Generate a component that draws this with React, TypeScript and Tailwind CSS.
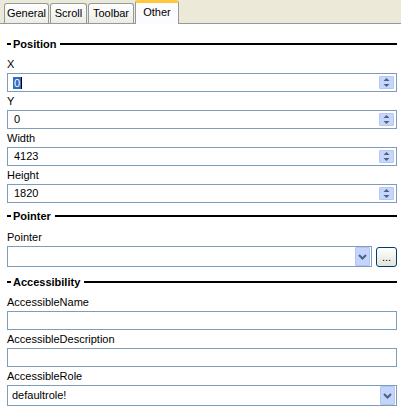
import { ReactNode } from "react";

const tabs = ["General", "Scroll", "Toolbar", "Other"];
const tabWidths: Record<string, string> = {
  General: "w-[45px]",
  Scroll: "w-[37px]",
  Toolbar: "w-[46px]",
  Other: "w-[44px]",
};

function SectionHeader({ title }: { title: string }) {
  return (
    <div className="flex items-center h-[22px]">
      <div className="w-[4px] h-[2px] bg-black" />
      <span className="ml-[2px] mr-[4px] font-bold text-[11px] leading-[13px] text-black">{title}</span>
      <div className="flex-1 h-[2px] bg-black" />
    </div>
  );
}

function Label({ children }: { children: ReactNode }) {
  return <div className="h-[18px] pt-[3px] leading-[13px] text-[11px] text-black">{children}</div>;
}

// XP-style up/down spinner on the right of a number box
function Spinner() {
  return (
    <div className="w-[15px] h-[13px] bg-[#c6d6fc] border border-[#b4c8f4] rounded-[1px] flex items-center justify-center">
      <svg width="7" height="9" viewBox="0 0 7 9">
        <path d="M3.5 0 L6.5 3 L0.5 3 Z" fill="#4d6185" />
        <path d="M0.5 6 L6.5 6 L3.5 9 Z" fill="#4d6185" />
      </svg>
    </div>
  );
}

function NumberField({ value, selected }: { value: string; selected?: boolean }) {
  return (
    <div className="h-[19px] border border-[#7f9db9] bg-white flex items-center pl-[5px] pr-[2px]">
      <div className="flex-1 flex items-center text-[11px] leading-[13px] text-black">
        {selected ? (
          <>
            <span className="bg-[#316ac5] text-white px-[1px] leading-[12px]">{value}</span>
            <span className="w-[1px] h-[12px] bg-black" />
          </>
        ) : (
          <span className="pl-[1px]">{value}</span>
        )}
      </div>
      <Spinner />
    </div>
  );
}

function ComboButton() {
  return (
    <div className="w-[15px] h-[19px] bg-[#c4d4fc] border border-[#b2c6f6] rounded-[1px] flex items-center justify-center">
      <svg width="9" height="6" viewBox="0 0 9 6">
        <path d="M1 1 L4.5 4.5 L8 1" stroke="#4d6185" strokeWidth="2" fill="none" />
      </svg>
    </div>
  );
}

function Combo({ value, className }: { value?: string; className?: string }) {
  return (
    <div className={`h-[21px] border border-[#7f9db9] bg-white flex items-center pl-[4px] pr-[1px] ${className ?? ""}`}>
      <span className="flex-1 text-[11px] leading-[13px] text-black">{value}</span>
      <ComboButton />
    </div>
  );
}

function TextField() {
  return <div className="h-[19px] border border-[#7f9db9] bg-white" />;
}

export default function App() {
  return (
    <div
      className="w-[401px] h-[413px] overflow-hidden bg-white flex flex-col"
      style={{ fontFamily: '"Liberation Sans", Arial, sans-serif' }}
    >
      {/* Tab strip */}
      <div className="h-[24px] bg-[#ece9d8] border-b border-[#919b9c] flex items-end pl-[4px] shrink-0">
        {tabs.map((t) => {
          const active = t === "Other";
          return active ? (
            <div
              key={t}
              className={`${tabWidths[t]} h-[24px] -mb-[1px] bg-[#fcfcfe] border-x border-[#919b9c] rounded-t-[3px] border-t-[3px] border-t-[#ffc83c] flex items-center justify-center text-[11px] text-black pb-[3px]`}
            >
              {t}
            </div>
          ) : (
            <div
              key={t}
              className={`${tabWidths[t]} h-[20px] mr-[1px] bg-gradient-to-b from-[#ffffff] to-[#ecebe5] border-x border-t border-[#919b9c] rounded-t-[3px] flex items-center justify-center text-[11px] text-black`}
            >
              {t}
            </div>
          );
        })}
      </div>

      {/* Property panel */}
      <div className="flex-1 pl-[7px] pr-[4px] pt-[9px]">
        <SectionHeader title="Position" />
        <Label>X</Label>
        <NumberField value="0" selected />
        <Label>Y</Label>
        <NumberField value="0" />
        <Label>Width</Label>
        <NumberField value="4123" />
        <Label>Height</Label>
        <NumberField value="1820" />

        <div className="mt-[2px]">
          <SectionHeader title="Pointer" />
        </div>
        <div className="pt-[1px]">
          <Label>Pointer</Label>
        </div>
        <div className="flex items-center gap-[4px]">
          <Combo className="flex-1" />
          <button className="w-[21px] h-[20px] rounded-[3px] border border-[#003c74] bg-gradient-to-b from-[#ffffff] to-[#e3e2da] text-[11px] leading-[10px] text-black flex items-end justify-center pb-[4px]">
            ...
          </button>
        </div>

        <div className="mt-[4px]">
          <SectionHeader title="Accessibility" />
        </div>
        <Label>AccessibleName</Label>
        <TextField />
        <Label>AccessibleDescription</Label>
        <TextField />
        <Label>AccessibleRole</Label>
        <Combo value="defaultrole!" />
      </div>
    </div>
  );
}
